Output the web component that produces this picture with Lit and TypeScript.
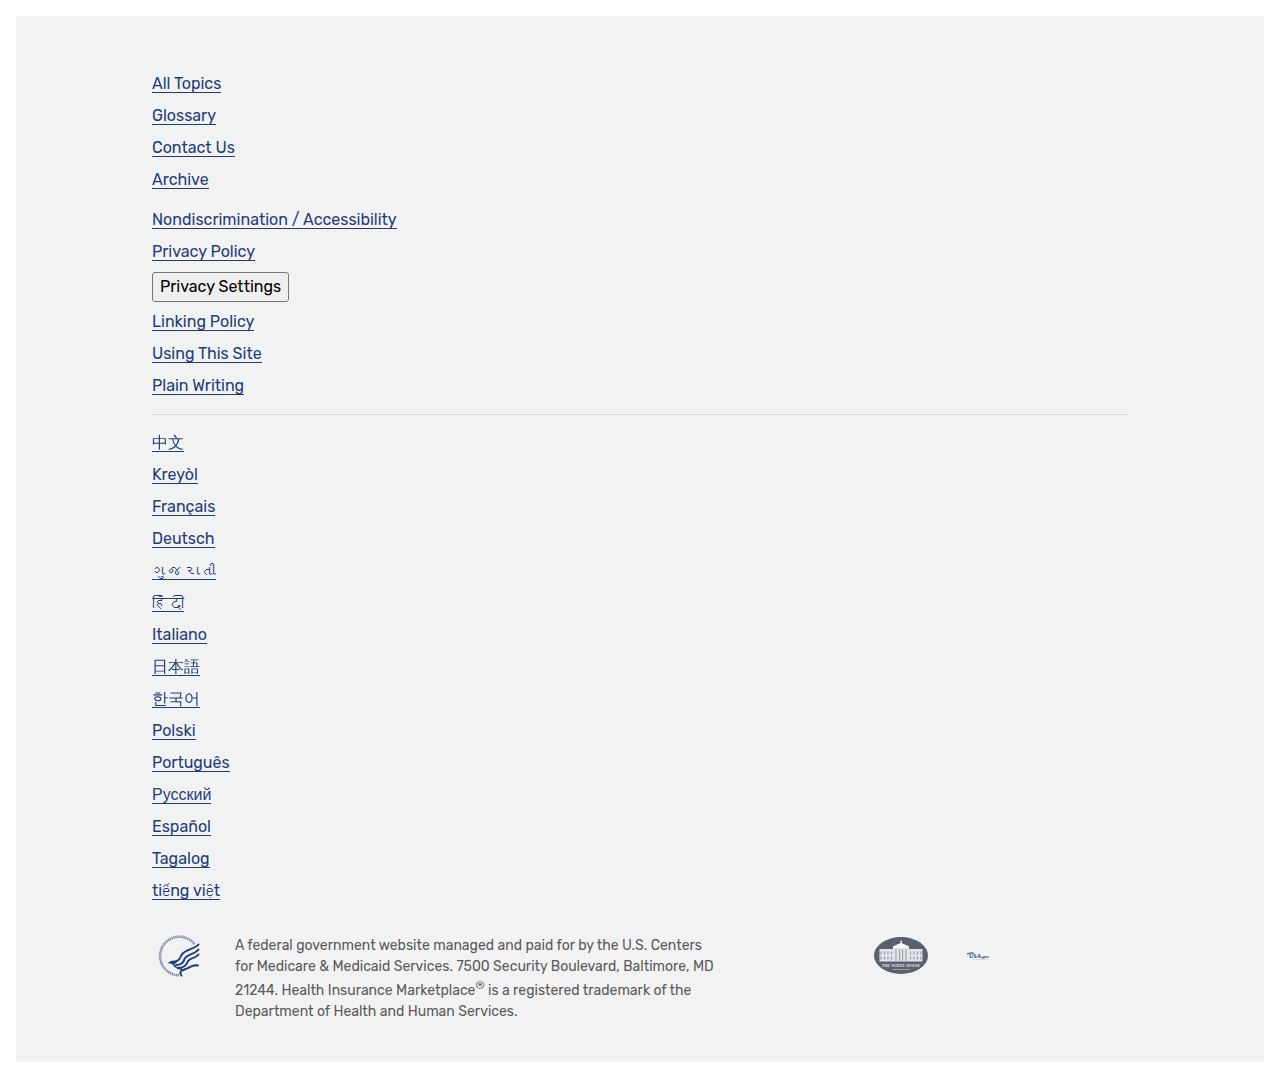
import { LitElement, html, css, svg } from "lit";
import { customElement } from "lit/decorators.js";

const SITE_LINKS = ["All Topics", "Glossary", "Contact Us", "Archive"];
const POLICY_LINKS = ["Nondiscrimination / Accessibility", "Privacy Policy"];
const USAGE_LINKS = ["Linking Policy", "Using This Site", "Plain Writing"];
const LANGUAGES: [string, unknown][] = [
  ["zh", "中文"], ["ht", "Kreyòl"], ["fr", "Français"], ["de", "Deutsch"],
  ["gu", "ગુજરાતી"], ["hi", "हिंदी"], ["it", "Italiano"], ["ja", "日本語"],
  ["ko", "한국어"], ["pl", "Polski"], ["pt", "Português"], ["ru", "Русский"],
  ["es", "Español"], ["tl", "Tagalog"],
  ["vi", html`ti<span class="bitmap">ế</span>ng vi<span class="bitmap">ệ</span>t`],
];

const link = (label: string) => html`<li><a href="#">${label}</a></li>`;

const hhsLogo = html`<svg class="hhs" viewBox="0 0 42 42" role="img" aria-label="Department of Health and Human Services">
  <path d="M21 40.300A19.300 19.300 0 1 1 36.500 9" fill="none" stroke="#1f3d7a" stroke-opacity=".6" stroke-width="2.600" stroke-dasharray="1.300 .7"/>
  <g fill="none" stroke="#1f3d7a" stroke-linecap="round">
    <path d="M40.500 9.500C37 14 27 14 23.500 20C22 24 20 27 15 27" stroke-width="2"/>
    <path d="M40.500 14.500C37 19.500 28.500 19 26.500 24C25.500 28 22 30 18 30" stroke-width="2"/>
    <path d="M40.500 19.500C37.500 24 31 22.500 29.500 27C28 31 25 33 20 33" stroke-width="2"/>
    <path d="M40 30.500C35 29 32 32.500 29 33.500C25 34.500 20 37 23.500 40.500" stroke-width="1.900"/>
    <path d="M14 27.500C16 32 20 34 26 35" stroke-width="1.500"/>
  </g>
  <path d="M9.500 28Q14 24.500 20 26L17 29L14 29Z" fill="#1f3d7a"/>
</svg>`;

const windowBays = [7, 10.5, 14, 17.5, 36.5, 40, 43.5, 47];
const whiteHouse = html`<svg class="white-house" viewBox="0 0 54 37" role="img" aria-label="The White House">
  <ellipse cx="27" cy="18.500" rx="27" ry="18.500" fill="#59616f"/>
  <path d="M5.500 12H19V9.500L27 6L35 9.500V12H48.500V24.500H5.500Z" fill="#e3e5e9"/>
  <path d="M26.500 3.500H28V6H26.500z" fill="#eef0f2"/>
  <path d="M19 9.500L27 6L35 9.500V11H19Z" fill="#f8f8f8"/>
  ${windowBays.map((x) => svg`<path d="M${x} 14.500v3M${x} 19.500v3" stroke="#969ca7" stroke-width="1.200"/>`)}
  ${[22, 25.5, 28.5, 32].map((x) => svg`<path d="M${x} 12.500v11" stroke="#9aa0aa" stroke-width="1.200"/>`)}
  <text x="27" y="29.500" text-anchor="middle" font-size="4" font-family="Liberation Serif, serif" font-weight="700" fill="#e3e5e8">THE WHITE HOUSE</text>
  <path d="M19 32.500H36" stroke="#b9bec7" stroke-width="1" stroke-dasharray="1.300 .6"/>
</svg>`;

const usaGov = html`<svg class="usa" viewBox="0 0 22 8" role="img" aria-label="USA.gov">
  <text x="2" y="6" font-size="6" font-family="Liberation Serif, serif" font-weight="700" fill="#204078">USA<tspan font-size="5" font-style="italic">.gov</tspan></text>
  <path d="M0 2Q3 .2 7 1.200" fill="none" stroke="#204078" stroke-width="1"/>
  <path d="M6 7.500H22" stroke="#9aa6bf" stroke-width=".5" stroke-dasharray="1 .6"/>
</svg>`;

@customElement("app-root")
export class AppRoot extends LitElement {
  static styles = css`
    :host {
      display: block;
      padding: 16px;
      font: 400 16px/24px Rubik, "WenQuanYi Zen Hei", "Noto Sans CJK SC", sans-serif;
      color: #5a5a5a;
    }
    footer { background: #f2f2f2; padding: 56px 16px 40px; }
    .container { max-width: 976px; margin: 0 auto; }
    ul { display: flex; flex-direction: column; align-items: flex-start; gap: 8px; list-style: none; margin: 0; padding: 0; }
    .policies { margin-top: 16px; }
    li { height: 24px; }
    .setting { height: 30px; }
    a { display: inline-block; height: 20px; line-height: 24px; border-bottom: 1px solid #1f3d7a; color: #1f3d7a; text-decoration: none; vertical-align: top; }
    a:lang(gu), a:lang(hi), .bitmap { font-family: Unifont, sans-serif; }
    .bitmap { line-height: 16px; }
    a:lang(ru) { font-family: "Liberation Sans", sans-serif; }
    button { display: block; height: 30px; padding: 0 7px; border: 1px solid #767676; border-radius: 3px; background: #efefef; color: #000; font: inherit; }
    hr { height: 1px; margin: 16px 0 15px; border: 0; background: #d6d7d9; }
    .languages { padding-top: 1px; }
    .legal { display: grid; grid-template-columns: 83px minmax(0, 488px) minmax(0, 1fr); margin-top: 32px; }
    p { margin: 0; max-width: 484px; font-size: 14px; line-height: 21px; }
    sup { font-size: 11px; line-height: 18px; }
    svg { display: block; }
    .hhs { width: 42px; margin: 0 6px; }
    .partners { display: flex; gap: 39px; align-items: flex-start; padding: 2px 0 0 151px; }
    .white-house { width: 54px; flex: none; }
    .usa { width: 22px; flex: none; margin-top: 15px; }
  `;

  render() {
    return html`<footer>
      <div class="container">
        <nav aria-label="Footer">
          <ul>${SITE_LINKS.map(link)}</ul>
          <ul class="policies">
            ${POLICY_LINKS.map(link)}
            <li class="setting"><button type="button">Privacy Settings</button></li>
            ${USAGE_LINKS.map(link)}
          </ul>
        </nav>
        <hr />
        <nav class="languages" aria-label="Languages">
          <ul>${LANGUAGES.map(([code, name]) => html`<li><a href="#" lang=${code}>${name}</a></li>`)}</ul>
        </nav>
        <div class="legal">
          <div>${hhsLogo}</div>
          <p>A federal government website managed and paid for by the U.S. Centers for Medicare &amp; Medicaid Services. 7500 Security Boulevard, Baltimore, MD 21244. Health Insurance Marketplace<sup>®</sup> is a registered trademark of the Department of Health and Human Services.</p>
          <div class="partners">${whiteHouse}${usaGov}</div>
        </div>
      </div>
    </footer>`;
  }
}
